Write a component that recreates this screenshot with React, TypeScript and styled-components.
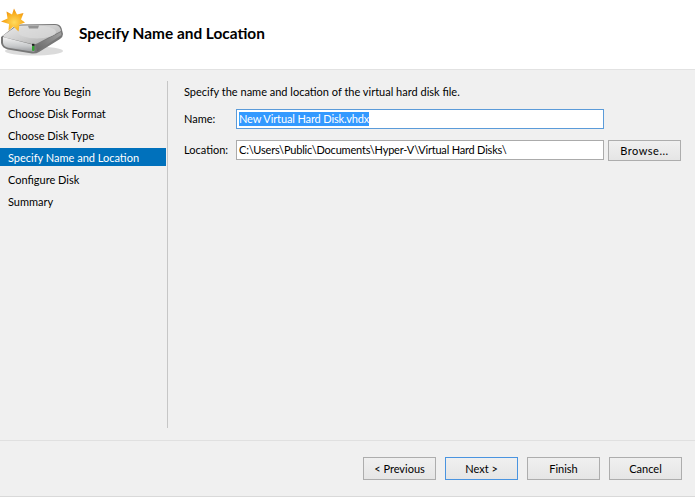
import React from "react";
import styled, { createGlobalStyle } from "styled-components";

const Global = createGlobalStyle`
  html, body { margin: 0; padding: 0; background: #f0f0f0; }
  body { font-family: "Lato", "Open Sans", "Liberation Sans", sans-serif; font-size: 11px; color: #000; }
  * { box-sizing: border-box; }
`;

const Page = styled.div`
  width: 695px;
  height: 497px;
  display: flex;
  flex-direction: column;
  overflow: hidden;
  background: #f0f0f0;
`;

const Header = styled.header`
  height: 70px;
  flex: none;
  background: #fff;
  border-bottom: 1px solid #e2e2e2;
  display: flex;
  align-items: flex-start;
`;

const IconBox = styled.div`
  width: 79px;
  height: 69px;
  flex: none;
`;

const Title = styled.h1`
  margin: 23px 0 0;
  font-size: 15.4px;
  line-height: 20px;
  font-weight: 700;
  color: #000;
`;

const Body = styled.div`
  height: 358px;
  flex: none;
  padding-top: 11px;
  display: flex;
  align-items: stretch;
`;

const Steps = styled.nav`
  width: 168px;
  flex: none;
  border-right: 1px solid #c6c6c6;
  padding-top: 1px;
  display: flex;
  flex-direction: column;
  gap: 4px;
`;

const Step = styled.div<{ $active?: boolean }>`
  height: 18px;
  width: 166px;
  padding-left: 8px;
  line-height: 20px;
  white-space: nowrap;
  background: ${(p) => (p.$active ? "#0071bc" : "transparent")};
  color: ${(p) => (p.$active ? "#fff" : "#000")};
`;

const Content = styled.main`
  flex: 1;
  padding: 2px 14px 0 16px;
`;

const Intro = styled.p`
  margin: 0 0 8px;
  height: 18px;
  line-height: 18px;
  white-space: nowrap;
`;

const Row = styled.div`
  display: flex;
  align-items: flex-start;
  margin-bottom: 11px;
`;

const Label = styled.label`
  width: 52px;
  flex: none;
  line-height: 20px;
`;

const Field = styled.div<{ $focused?: boolean }>`
  width: 368px;
  height: 20px;
  flex: none;
  background: #fff;
  border: 1px solid ${(p) => (p.$focused ? "#5b9bd9" : "#ababab")};
  padding-left: 2px;
  line-height: 18px;
  letter-spacing: ${(p) => (p.$focused ? "-0.12px" : "-0.2px")};
  white-space: nowrap;
`;

const Selected = styled.span`
  background: #3399ff;
  color: #fff;
  display: inline-block;
  height: 14px;
  line-height: 14px;
  vertical-align: top;
  margin-top: 2px;
`;

const Button = styled.button<{ $focused?: boolean }>`
  width: 73px;
  height: 23px;
  flex: none;
  padding: 0;
  font-family: inherit;
  font-size: 11px;
  line-height: 19px;
  color: #000;
  border: 1px solid ${(p) => (p.$focused ? "#4a94e0" : "#adadad")};
  border-radius: 0;
  background: linear-gradient(#f0f0f0, #e5e5e5);
`;

const BrowseButton = styled(Button)`
  margin-left: 4px;
  height: 21px;
  letter-spacing: 0.5px;
`;

const Footer = styled.footer`
  flex: 1;
  border-top: 1px solid #e0e0e0;
  border-bottom: 1px solid #d9d9d9;
  margin-top: 12px;
  padding: 16px 13px 0 0;
  display: flex;
  justify-content: flex-end;
  align-items: flex-start;
  gap: 9px;
`;

const DiskIcon = () => (
  <svg width="66" height="58" viewBox="0 0 66 58">
    <defs>
      <linearGradient id="top" x1="0" y1="0" x2="1" y2="1">
        <stop offset="0" stopColor="#ececec" />
        <stop offset="0.55" stopColor="#cbcbcb" />
        <stop offset="1" stopColor="#a8a8a8" />
      </linearGradient>
      <linearGradient id="front" x1="0" y1="0" x2="0" y2="1">
        <stop offset="0" stopColor="#f4f4f4" />
        <stop offset="0.6" stopColor="#c8cacc" />
        <stop offset="1" stopColor="#97999c" />
      </linearGradient>
      <linearGradient id="side" x1="0" y1="1" x2="1" y2="0">
        <stop offset="0" stopColor="#666666" />
        <stop offset="1" stopColor="#a2a2a2" />
      </linearGradient>
      <radialGradient id="sun" cx="0.55" cy="0.6" r="0.55">
        <stop offset="0" stopColor="#ffdb5e" />
        <stop offset="0.7" stopColor="#f9ae1f" />
        <stop offset="1" stopColor="#ee9210" />
      </radialGradient>
    </defs>
    <ellipse cx="34" cy="51" rx="29" ry="4.5" fill="#000" opacity="0.14" />
    <path d="M1 37 L15 26 Q17 24.5 21 24.5 L55 24 Q60 24 61.5 28 L63 34 Q63 37 60 39 L39 52 Q36 54 32 53.5 L8 49.5 Q2 48 1 43 Z" fill="#777777" />
    <path d="M3 35.5 L16 26.5 Q18 25.5 22 25.5 L55 25 Q59 25 60.5 29 L61 31 L37 43.5 Q35 44.5 32 44 L5 37.5 Q3.5 37 3 35.5 Z" fill="url(#top)" />
    <ellipse cx="37" cy="32" rx="19" ry="6.5" fill="#dcdcdc" opacity="0.7" />
    <path d="M28 25.8 L39 25.6 L38 28.5 L29 28.5 Z" fill="#949494" />
    <path d="M3 37 L33 44.8 L34.5 52 L8 47.8 Q3.5 46.8 3 43 Z" fill="url(#front)" />
    <path d="M36 45 L61 32 L61.5 35 L37 51.5 Z" fill="url(#side)" />
    <rect x="32" y="45.5" width="2.4" height="5.5" rx="1" fill="#33a533" />
    <rect x="32" y="43.8" width="2.4" height="2" fill="#1d1d1d" />
    <path
      d="M14 8.5 L17 14.5 L23.5 13 L21 19.5 L25 22.5 L19.5 24.5 L18.5 31.5 L13.5 26.5 L8.5 30.5 L9 24 L1 21.5 L7.5 18.5 L6.5 11.5 L12 14.5 Z"
      fill="url(#sun)"
    />
  </svg>
);

export default function App() {
  return (
    <Page>
      <Global />
      <Header>
        <IconBox>
          <DiskIcon />
        </IconBox>
        <Title>Specify Name and Location</Title>
      </Header>
      <Body>
        <Steps>
          <Step>Before You Begin</Step>
          <Step>Choose Disk Format</Step>
          <Step>Choose Disk Type</Step>
          <Step $active>Specify Name and Location</Step>
          <Step>Configure Disk</Step>
          <Step>Summary</Step>
        </Steps>
        <Content>
          <Intro>Specify the name and location of the virtual hard disk file.</Intro>
          <Row>
            <Label>Name:</Label>
            <Field $focused>
              <Selected>New Virtual Hard Disk.vhdx</Selected>
            </Field>
          </Row>
          <Row>
            <Label>Location:</Label>
            <Field>C:\Users\Public\Documents\Hyper-V\Virtual Hard Disks\</Field>
            <BrowseButton>Browse...</BrowseButton>
          </Row>
        </Content>
      </Body>
      <Footer>
        <Button>&lt; Previous</Button>
        <Button $focused>Next &gt;</Button>
        <Button>Finish</Button>
        <Button>Cancel</Button>
      </Footer>
    </Page>
  );
}
